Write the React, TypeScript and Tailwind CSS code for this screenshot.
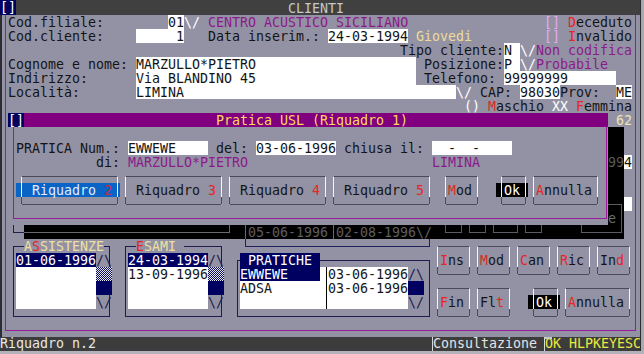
import React from 'react';

// hotkey letter inside a label
const Hk = ({ children }: { children: React.ReactNode }) => (
  <span className="text-[#e42626]">{children}</span>
);

function Cell({ className, children }: { className: string; children?: React.ReactNode }) {
  return <div className={`whitespace-pre ${className}`}>{children}</div>;
}

// 3d button outline, drawn through the middle of the text cells
function BtnFrame({ className }: { className: string }) {
  return (
    <div
      className={`relative mt-[7px] mb-[6px] ml-[5px] mr-[2px] border-t border-b border-l border-r border-t-[#4a4a5a] border-b-[#4a4a5a] border-l-[#f6f6f6] border-r-[#f6f6f6] ${className}`}
    >
      <div className="absolute -left-px -right-px bottom-0 h-[7px] border-l border-r border-[#4a4a5a]" />
    </div>
  );
}

function ListFrame({ className }: { className: string }) {
  return <div className={`mt-[7px] mb-[6px] ml-[5px] mr-[2px] border border-[#1c1c4e]`+ ` ${className}`} />;
}

// dotted scroll track (the dos shade character)
function Shade({ id, className }: { id: string; className: string }) {
  return (
    <svg className={className} width="16" height="14" viewBox="0 0 16 14">
      <defs>
        <pattern id={id} width="2" height="2" patternUnits="userSpaceOnUse">
          <rect width="2" height="2" fill="#e6e6f0" />
          <rect width="1" height="1" fill="#10105a" />
          <rect x="1" y="1" width="1" height="1" fill="#10105a" />
        </pattern>
      </defs>
      <rect width="16" height="14" fill={`url(#${id})`} />
    </svg>
  );
}

export default function App() {
  return (
    <div className="flex h-[354px] w-[644px] flex-col overflow-hidden bg-[#b2b2ba] font-['DejaVu_Sans_Mono',monospace] text-[13.3px] leading-[16px] text-[#141414]">
      <div className="flex h-[351px]">
        <div className="grid h-[351px] w-[640px] grid-cols-[repeat(80,8px)] grid-rows-[repeat(25,14px)] bg-[#9392a4] pt-px">
          {/* window title */}
          <div className="col-start-1 col-end-81 row-start-1 -mt-px bg-[#404040]" />
          <Cell className="col-start-1 col-end-3 row-start-1 -mt-px bg-[#000060] text-white">[]</Cell>
          <Cell className="col-start-37 row-start-1 text-[#c8c8c8]">CLIENTI</Cell>

          {/* frame of the main window */}
          <div className="col-start-1 row-start-2 row-end-25 border-l-2 border-[#2c2c32]" />
          <div className="col-start-1 col-end-81 row-start-2 row-end-25 mb-[6px] ml-[5px] mr-[4px] border-l border-r border-b border-[#9a1a9a]" />

          {/* row 1 */}
          <Cell className="col-start-2 row-start-2">Cod.filiale:</Cell>
          <Cell className="col-start-22 col-end-24 row-start-2 bg-white">01</Cell>
          <Cell className="col-start-24 row-start-2 text-white">\/</Cell>
          <Cell className="col-start-27 row-start-2 text-[#8b1a8b]">CENTRO ACUSTICO SICILIANO</Cell>
          <Cell className="col-start-69 row-start-2 text-[#eaa6ee]">[]</Cell>
          <Cell className="col-start-72 row-start-2"><Hk>D</Hk>eceduto</Cell>

          {/* row 2 */}
          <Cell className="col-start-2 row-start-3">Cod.cliente:</Cell>
          <Cell className="col-start-18 col-end-24 row-start-3 bg-white text-right">1</Cell>
          <Cell className="col-start-27 row-start-3">Data inserim.:</Cell>
          <Cell className="col-start-42 col-end-52 row-start-3 bg-white">24-03-1994</Cell>
          <Cell className="col-start-53 row-start-3 text-[#eedc96]">Giovedi</Cell>
          <Cell className="col-start-69 row-start-3 text-[#eaa6ee]">[]</Cell>
          <Cell className="col-start-72 row-start-3"><Hk>I</Hk>nvalido</Cell>

          {/* row 3 */}
          <Cell className="col-start-51 row-start-4">Tipo cliente:</Cell>
          <Cell className="col-start-64 col-end-66 row-start-4 bg-white">N</Cell>
          <Cell className="col-start-66 row-start-4 text-white">\/</Cell>
          <Cell className="col-start-68 row-start-4 text-[#8b1a8b]">Non codifica</Cell>

          {/* row 4 */}
          <Cell className="col-start-2 row-start-5">Cognome e nome:</Cell>
          <Cell className="col-start-18 col-end-53 row-start-5 bg-white">MARZULLO*PIETRO</Cell>
          <Cell className="col-start-54 row-start-5">Posizione:</Cell>
          <Cell className="col-start-64 col-end-66 row-start-5 bg-white">P</Cell>
          <Cell className="col-start-66 row-start-5 text-white">\/</Cell>
          <Cell className="col-start-68 row-start-5 text-[#8b1a8b]">Probabile</Cell>

          {/* row 5 */}
          <Cell className="col-start-2 row-start-6">Indirizzo:</Cell>
          <Cell className="col-start-18 col-end-53 row-start-6 bg-white">Via BLANDINO 45</Cell>
          <Cell className="col-start-54 row-start-6">Telefono:</Cell>
          <Cell className="col-start-64 col-end-78 row-start-6 bg-white">99999999</Cell>

          {/* row 6 */}
          <Cell className="col-start-2 row-start-7">Località:</Cell>
          <Cell className="col-start-18 col-end-58 row-start-7 bg-white">LIMINA</Cell>
          <Cell className="col-start-58 row-start-7 text-white">\/</Cell>
          <Cell className="col-start-61 row-start-7">CAP:</Cell>
          <Cell className="col-start-66 col-end-71 row-start-7 bg-white">98030</Cell>
          <Cell className="col-start-71 row-start-7">Prov:</Cell>
          <Cell className="col-start-78 col-end-80 row-start-7 bg-white">ME</Cell>

          {/* row 7 */}
          <Cell className="col-start-59 row-start-8 text-white">()</Cell>
          <Cell className="col-start-62 row-start-8"><Hk>M</Hk>aschio</Cell>
          <Cell className="col-start-70 row-start-8 text-white">XX</Cell>
          <Cell className="col-start-73 row-start-8"><Hk>F</Hk>emmina</Cell>

          {/* what shows of the window under the dialog */}
          <Cell className="col-start-78 row-start-9 text-[#ece4b0]">62</Cell>
          <div className="col-start-77 col-end-79 row-start-10 row-end-18 bg-black" />
          <Cell className="col-start-77 row-start-12 text-[#5a5a5a]">99</Cell>
          <Cell className="col-start-79 row-start-12 bg-white">4</Cell>
          <div className="col-start-79 row-start-15 bg-white" />
          <div className="col-start-4 col-end-79 row-start-17 bg-black" />
          <div className="col-start-2 col-end-4 row-start-17 -mt-px mb-[6px] ml-[5px] border-l border-b border-[#20204e]" />
          <div className="col-start-4 col-end-30 row-start-17 mb-[6px] mr-[2px] border-r border-b border-[#6a6a6e]" />
          <div className="col-start-31 row-start-17 ml-[5px] border-l border-[#6a6a6e]" />
          <Cell className="col-start-32 row-start-17 text-[#5e5e62]">05-06-1996</Cell>
          <div className="col-start-42 row-start-17 ml-[5px] border-l border-[#6a6a6e]" />
          <Cell className="col-start-43 row-start-17 text-[#5e5e62]">02-08-1996</Cell>
          <Cell className="col-start-53 row-start-17 text-[#5e5e62]">\/</Cell>
          <div className="col-start-31 col-end-55 row-start-18 mb-[6px] ml-[5px] mr-[2px] border-l border-r border-b border-[#20205a]" />
          <div className="col-start-56 col-end-59 row-start-17 mb-[6px] ml-[5px] mr-[2px] border-l border-r border-b border-[#5c5c64]" />
          <div className="col-start-59 col-end-62 row-start-17 mb-[6px] ml-[5px] mr-[2px] border-l border-r border-b border-[#5c5c64]" />
          <div className="col-start-62 col-end-66 row-start-17 mb-[6px] ml-[5px] mr-[2px] border-l border-r border-b border-[#5c5c64]" />
          <div className="col-start-66 col-end-69 row-start-17 mb-[6px] ml-[5px] mr-[2px] border-l border-r border-b border-[#5c5c64]" />
          <div className="col-start-73 col-end-79 row-start-15 row-end-18 mt-[7px] mb-[6px] ml-[5px] mr-[2px] border border-[#5c5c64]" />
          <Cell className="col-start-77 row-start-16 text-[#6a6a70]">e</Cell>

          {/* dialog Pratica USL */}
          <div className="col-start-2 col-end-77 row-start-9 bg-[#800080]" />
          <Cell className="col-start-2 col-end-4 row-start-9 bg-[#000060] text-white">[]</Cell>
          <Cell className="col-start-28 row-start-9 text-[#ffd95a]">Pratica USL (Riquadro 1)</Cell>
          <div className="col-start-2 col-end-77 row-start-10 row-end-17 bg-[#9392a4]" />
          <div className="col-start-2 col-end-77 row-start-10 row-end-17 mb-[6px] ml-[5px] mr-[1px] border-l border-r border-b border-[#9a1a9a]" />

          <Cell className="col-start-3 row-start-11">PRATICA Num.:</Cell>
          <Cell className="col-start-17 col-end-27 row-start-11 bg-white">EWWEWE</Cell>
          <Cell className="col-start-28 row-start-11">del:</Cell>
          <Cell className="col-start-33 col-end-43 row-start-11 bg-white">03-06-1996</Cell>
          <Cell className="col-start-44 row-start-11">chiusa il:</Cell>
          <Cell className="col-start-55 col-end-65 row-start-11 bg-white">{'  -  -'}</Cell>

          <Cell className="col-start-13 row-start-12">di:</Cell>
          <Cell className="col-start-17 row-start-12 text-[#8b1a8b]">MARZULLO*PIETRO</Cell>
          <Cell className="col-start-55 row-start-12 text-[#8b1a8b]">LIMINA</Cell>

          <BtnFrame className="col-start-3 col-end-16 row-start-13 row-end-16" />
          <Cell className="col-start-3 col-end-16 row-start-14 bg-[#0a64c6] text-[#e4ecff]">
            {'  Riquadro '}<span className="text-[#c8283c]">2</span>
          </Cell>
          <BtnFrame className="col-start-16 col-end-29 row-start-13 row-end-16" />
          <Cell className="col-start-18 row-start-14">Riquadro <Hk>3</Hk></Cell>
          <BtnFrame className="col-start-29 col-end-42 row-start-13 row-end-16" />
          <Cell className="col-start-31 row-start-14">Riquadro <Hk>4</Hk></Cell>
          <BtnFrame className="col-start-42 col-end-55 row-start-13 row-end-16" />
          <Cell className="col-start-44 row-start-14">Riquadro <Hk>5</Hk></Cell>
          <BtnFrame className="col-start-56 col-end-61 row-start-13 row-end-16" />
          <Cell className="col-start-57 row-start-14"><Hk>M</Hk>od</Cell>
          <BtnFrame className="col-start-63 col-end-67 row-start-13 row-end-16" />
          <Cell className="col-start-63 col-end-67 row-start-14 bg-black text-white">{' Ok'}</Cell>
          <BtnFrame className="col-start-67 col-end-76 row-start-13 row-end-16" />
          <Cell className="col-start-68 row-start-14"><Hk>A</Hk>nnulla</Cell>

          {/* ASSISTENZE */}
          <ListFrame className="col-start-2 col-end-15 row-start-18 row-end-24" />
          <Cell className="col-start-4 col-end-14 row-start-18 bg-[#9392a4] text-[#f0e0a0]">
            A<span className="text-[#e42626]">S</span>SISTENZE
          </Cell>
          <div className="col-start-3 col-end-13 row-start-19 row-end-23 bg-white" />
          <Cell className="col-start-3 col-end-13 row-start-19 bg-[#000060] text-white">01-06-1996</Cell>
          <Cell className="col-start-13 row-start-19 text-[#1c1c4e]">/\</Cell>
          <Shade id="shade-a" className="col-start-13 col-end-15 row-start-20" />
          <div className="col-start-13 col-end-15 row-start-21 bg-[#000060]" />
          <Cell className="col-start-13 row-start-22 text-[#1c1c4e]">\/</Cell>

          {/* ESAMI */}
          <ListFrame className="col-start-16 col-end-29 row-start-18 row-end-24" />
          <Cell className="col-start-18 col-end-24 row-start-18 bg-[#9392a4] text-[#f0e0a0]">
            <span className="text-[#e42626]">E</span>SAMI
          </Cell>
          <div className="col-start-17 col-end-27 row-start-19 row-end-23 bg-white" />
          <Cell className="col-start-17 col-end-27 row-start-19 bg-[#000060] text-white">24-03-1994</Cell>
          <Cell className="col-start-17 row-start-20">13-09-1996</Cell>
          <Cell className="col-start-27 row-start-19 text-[#1c1c4e]">/\</Cell>
          <Shade id="shade-e" className="col-start-27 col-end-29 row-start-20" />
          <div className="col-start-27 col-end-29 row-start-21 bg-[#000060]" />
          <Cell className="col-start-27 row-start-22 text-[#1c1c4e]">\/</Cell>

          {/* PRATICHE */}
          <ListFrame className="col-start-30 col-end-55 row-start-19 row-end-24" />
          <Cell className="col-start-31 col-end-41 row-start-19 bg-[#000060] text-white">{' PRATICHE'}</Cell>
          <div className="col-start-31 col-end-52 row-start-20 row-end-23 bg-white" />
          <div className="col-start-41 row-start-20 row-end-23 ml-[6px] border-l border-black" />
          <Cell className="col-start-31 col-end-41 row-start-20 bg-[#000060] text-white">EWWEWE</Cell>
          <Cell className="col-start-31 row-start-21">ADSA</Cell>
          <Cell className="col-start-42 row-start-20">03-06-1996</Cell>
          <Cell className="col-start-42 row-start-21">03-06-1996</Cell>
          <Cell className="col-start-52 row-start-20 text-[#1c1c4e]">/\</Cell>
          <div className="col-start-52 col-end-54 row-start-21 bg-[#000060]" />
          <Cell className="col-start-52 row-start-22 text-[#1c1c4e]">\/</Cell>

          {/* command buttons */}
          <BtnFrame className="col-start-55 col-end-60 row-start-18 row-end-21" />
          <Cell className="col-start-56 row-start-19"><Hk>I</Hk>ns</Cell>
          <BtnFrame className="col-start-60 col-end-65 row-start-18 row-end-21" />
          <Cell className="col-start-61 row-start-19"><Hk>M</Hk>od</Cell>
          <BtnFrame className="col-start-65 col-end-70 row-start-18 row-end-21" />
          <Cell className="col-start-66 row-start-19"><Hk>C</Hk>an</Cell>
          <BtnFrame className="col-start-70 col-end-75 row-start-18 row-end-21" />
          <Cell className="col-start-71 row-start-19"><Hk>R</Hk>ic</Cell>
          <BtnFrame className="col-start-75 col-end-80 row-start-18 row-end-21" />
          <Cell className="col-start-76 row-start-19">In<Hk>d</Hk></Cell>

          <BtnFrame className="col-start-55 col-end-60 row-start-21 row-end-24" />
          <Cell className="col-start-56 row-start-22"><Hk>F</Hk>in</Cell>
          <BtnFrame className="col-start-60 col-end-65 row-start-21 row-end-24" />
          <Cell className="col-start-61 row-start-22">Fl<Hk>t</Hk></Cell>
          <BtnFrame className="col-start-67 col-end-71 row-start-21 row-end-24" />
          <Cell className="col-start-67 col-end-71 row-start-22 bg-black text-white">{' Ok'}</Cell>
          <BtnFrame className="col-start-71 col-end-80 row-start-21 row-end-24" />
          <Cell className="col-start-72 row-start-22"><Hk>A</Hk>nnulla</Cell>

          {/* status line */}
          <div className="col-start-1 col-end-81 row-start-25 bg-[#3c3c3c]" />
          <Cell className="col-start-1 row-start-25 leading-[14px] text-[#e8e8e8]">Riquadro n.2</Cell>
          <Cell className="col-start-55 col-end-68 row-start-25 border-l border-[#d8d8d8] leading-[14px] text-[#e4e4e4]">Consultazione</Cell>
          <Cell className="col-start-69 col-end-81 row-start-25 border-l border-[#d8d8d8] leading-[14px] text-[#eaea40]">OK HLPKEYESC</Cell>
          <div className="col-start-69 row-start-25 ml-px h-[2px] bg-[#c8c8c8]" />
        </div>
        <div className="w-[4px] border-l border-[#2c2c2c] bg-[#a8a8b0]" />
      </div>
    </div>
  );
}
